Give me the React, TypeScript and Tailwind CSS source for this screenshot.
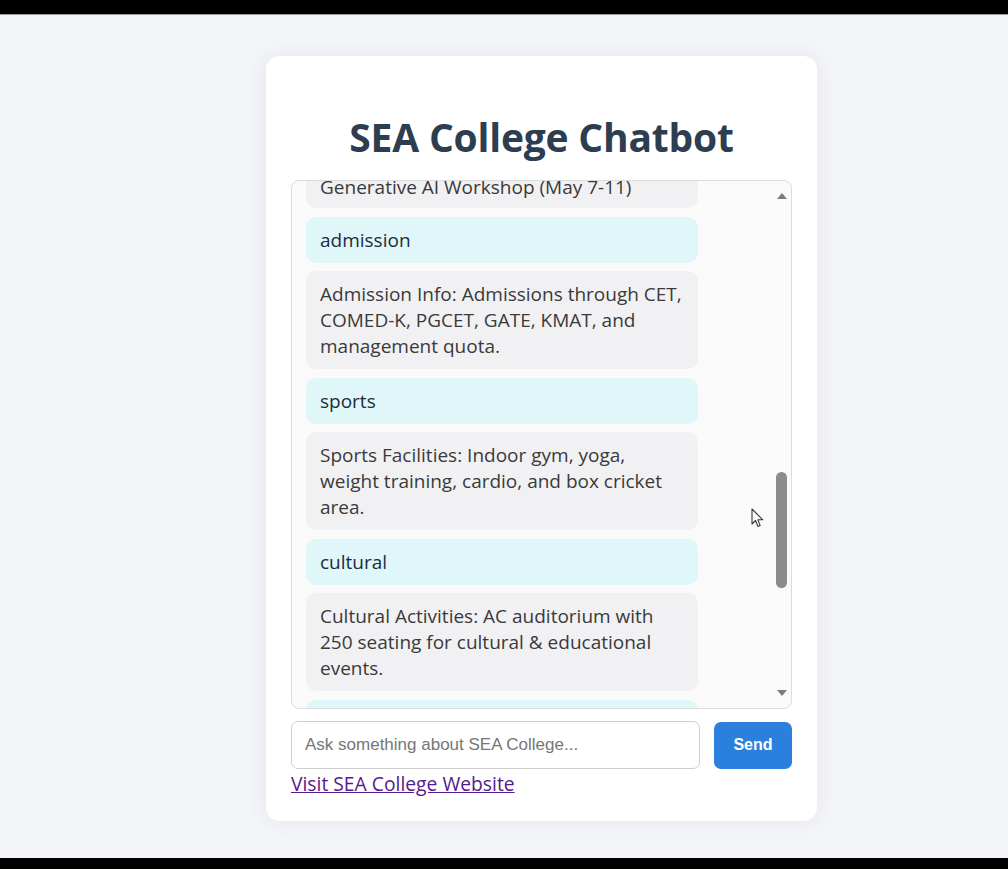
const messages = [
  { id: 1, from: 'bot', text: 'Generative AI Workshop (May 7-11)' },
  { id: 2, from: 'user', text: 'admission' },
  {
    id: 3,
    from: 'bot',
    text: 'Admission Info: Admissions through CET, COMED-K, PGCET, GATE, KMAT, and management quota.'
  },
  { id: 4, from: 'user', text: 'sports' },
  {
    id: 5,
    from: 'bot',
    text: 'Sports Facilities: Indoor gym, yoga, weight training, cardio, and box cricket area.'
  },
  { id: 6, from: 'user', text: 'cultural' },
  {
    id: 7,
    from: 'bot',
    text: 'Cultural Activities: AC auditorium with 250 seating for cultural & educational events.'
  },
  // next message is scrolled out of view, only its top edge shows
  { id: 8, from: 'user', text: '\u00a0' }
]

function Cursor() {
  return (
    <svg className="absolute left-[459px] top-[327px] w-[14px] h-[21px]" viewBox="0 0 14 21">
      <path
        d="M1 1 L1 16 L4.5 12.5 L7 18.5 L9.2 17.6 L6.8 11.8 L11.8 11.8 Z"
        fill="#ffffff"
        stroke="#3a3a3a"
        strokeWidth={1.1}
        strokeLinejoin="round"
      />
    </svg>
  )
}

export default function App() {
  return (
    <div className="h-[869px] flex flex-col bg-[#f4f5f9] font-['Open_Sans',sans-serif]">
      {/* top bar */}
      <div className="h-[15px] bg-black border-b border-[#9a9a9a]" />

      <div className="flex-1 pl-[266px] pt-[41px]">
        <div className="w-[551px] bg-white rounded-[14px] shadow-[0_0_22px_rgba(40,50,80,0.08)] pt-[59px] px-[25px] pb-[24px]">
          <h1 className="text-center text-[39px] leading-[43px] font-bold text-[#2c3e50] mb-[22px] tracking-[-0.2px]">
            SEA College Chatbot
          </h1>

          {/* chat box */}
          <div className="relative h-[529px] flex border border-[#dcdcdc] rounded-[8px] bg-[#fafafa] overflow-hidden">
            <div className="w-[407px] pl-[14px] overflow-hidden">
              <div className="-mt-[17px] flex flex-col gap-[8.5px]">
                {messages.map((m, i) => (
                  <div
                    key={m.id}
                    className={`w-[392px] rounded-[10px] px-[14px] text-[19px] leading-[26px] ${
                      i === 0 ? 'pt-[10px] pb-[8px]' : 'py-[10px]'
                    } ${m.from === 'user' ? 'bg-[#e0f7fa] text-[#1c2b3a]' : 'bg-[#f1f1f4] text-[#3a3a3a]'}`}
                  >
                    {m.text}
                  </div>
                ))}
              </div>
            </div>

            <div className="flex-1" />

            {/* scrollbar */}
            <div className="w-[17px] flex flex-col items-center pt-[12px] pb-[12px] mr-[1px]">
              <div className="w-0 h-0 border-l-[5px] border-r-[5px] border-b-[6px] border-l-transparent border-r-transparent border-b-[#7c7c7c]" />
              <div className="mt-[273px] w-[11px] h-[116px] rounded-full bg-[#8b8b8b]" />
              <div className="flex-1" />
              <div className="w-0 h-0 border-l-[5px] border-r-[5px] border-t-[6px] border-l-transparent border-r-transparent border-t-[#7c7c7c]" />
            </div>

            <Cursor />
          </div>

          {/* input row */}
          <div className="mt-[12px] flex items-center gap-[14px]">
            <input
              className="w-[409px] h-[48px] rounded-[7px] border border-[#cfcfcf] bg-white px-[13px] text-[17px] font-['Liberation_Sans',Arial,sans-serif] placeholder:text-[#767676] outline-none"
              placeholder="Ask something about SEA College..."
            />
            <button className="w-[78px] h-[47px] rounded-[7px] bg-[#2b80de] text-white text-[16px] font-bold font-['Liberation_Sans',Arial,sans-serif]">
              Send
            </button>
          </div>

          <a href="#" className="block mt-[2px] w-fit text-[19.3px] leading-[26px] text-[#551a8b] underline">
            Visit SEA College Website
          </a>
        </div>
      </div>

      {/* bottom bar */}
      <div className="h-[11px] bg-black" />
    </div>
  )
}
